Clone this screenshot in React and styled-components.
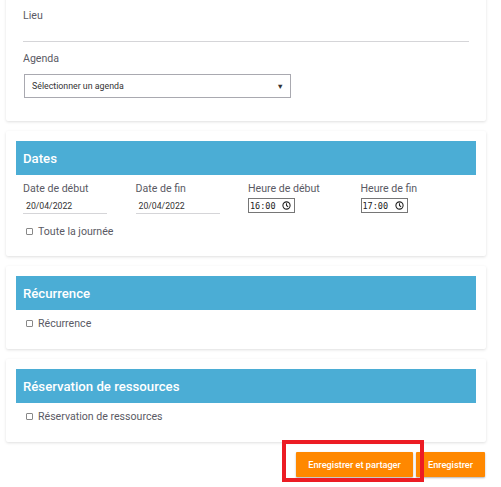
import React from 'react'
import styled, { createGlobalStyle } from 'styled-components'

const GlobalStyle = createGlobalStyle`
  html, body {
    margin: 0;
    padding: 0;
    background: #fff;
  }
  body {
    font-family: Roboto, "Liberation Sans", sans-serif;
    color: #555;
  }
`

const Page = styled.div`
  width: 480px;
  height: 487px;
  padding: 0 6px;
  display: flex;
  flex-direction: column;
  gap: 10px;
  overflow: hidden;
`

const Card = styled.section`
  flex: none;
  background: #fff;
  box-shadow: 0 1px 3px rgba(0, 0, 0, 0.13);
  border-radius: 2px;
  padding: ${(p) => p.pad || '10px 10px 0'};
  margin-top: ${(p) => p.offset || '0'};
`

const Header = styled.h2`
  margin: 0;
  height: 34px;
  line-height: 35px;
  padding: 0 7px;
  background: #4badd5;
  color: #fff;
  font-size: 13.2px;
  font-weight: 500;
`

const Field = styled.div`
  padding: 0 7px;
  margin-top: ${(p) => p.gap || 0}px;
`

const Label = styled.div`
  font-size: 10.6px;
  line-height: 14px;
  color: #5a5a64;
`

const Underline = styled.div`
  height: 18px;
  border-bottom: 1px solid #d5d5d8;
`

const Select = styled.div`
  margin: 8px 0 0 1px;
  width: 267px;
  height: 24px;
  border: 1px solid #a9a9b0;
  display: flex;
  align-items: center;
  justify-content: space-between;
  padding: 0 6px 0 7px;
  box-sizing: border-box;
  font-size: 8.8px;
  color: #333;
`

const Arrow = styled.span`
  font-size: 7.5px;
  color: #333;
`

const Grid = styled.div`
  display: grid;
  grid-template-columns: repeat(4, 112.5px);
  padding: 7px 7px 0;
`

const DateValue = styled.div`
  margin-top: 1px;
  width: 84px;
  height: 17px;
  border-bottom: 1px solid #d5d5d8;
  font-size: 8.7px;
  line-height: 18px;
  padding-left: 3px;
  box-sizing: border-box;
  color: #333;
`

const TimeBox = styled.div`
  margin-top: 2px;
  width: 47px;
  height: 15px;
  border: 1px solid #767676;
  box-sizing: border-box;
  display: flex;
  align-items: center;
  justify-content: space-between;
  padding: 0 3px 0 1px;
  font-family: "DejaVu Sans Mono", "Liberation Mono", monospace;
  font-size: 8.5px;
  color: #222;
`

const Check = styled.label`
  display: flex;
  align-items: center;
  gap: 5px;
  height: 13px;
  padding: ${(p) => p.pad || '7px 0 19px 10px'};
  font-size: 10.6px;
  color: #5a5a64;
`

const Box = styled.span`
  width: 5px;
  height: 5px;
  border: 1px solid #888;
  border-radius: 1px;
`

const Actions = styled.div`
  flex: none;
  display: flex;
  justify-content: flex-end;
  gap: 3px;
  padding: 0 1px 0 0;
`

const Highlight = styled.div`
  position: relative;
  display: flex;
`

const Frame = styled.span`
  position: absolute;
  left: -14px;
  top: -12px;
  right: -11px;
  bottom: -5px;
  border: 4px solid #ec1c24;
  pointer-events: none;
`

const Button = styled.button`
  height: 25px;
  width: ${(p) => p.w}px;
  border: none;
  border-radius: 1px;
  background: #ff8800;
  color: #fff;
  font-family: Roboto, "Liberation Sans", sans-serif;
  font-size: 9.2px;
  font-weight: 500;
  box-shadow: 0 1px 2px rgba(0, 0, 0, 0.3);
  padding: 0;
`

const Clock = () => (
  <svg width='9' height='9' viewBox='0 0 10 10' fill='none' stroke='#222' strokeWidth='1.2'>
    <circle cx='5' cy='5' r='4' />
    <path d='M5 2.6V5l1.8 1.6' />
  </svg>
)

const CheckRow = ({ label, pad }) => (
  <Check pad={pad}>
    <Box />
    {label}
  </Check>
)

const App = () => (
  <Page>
    <GlobalStyle />
    <Card offset='-20px' pad='29px 10px 23px'>
      <Field>
        <Label>Lieu</Label>
        <Underline />
      </Field>
      <Field gap={10}>
        <Label>Agenda</Label>
        <Select>
          Sélectionner un agenda
          <Arrow>▼</Arrow>
        </Select>
      </Field>
    </Card>

    <Card>
      <Header>Dates</Header>
      <Grid>
        <div>
          <Label>Date de début</Label>
          <DateValue>20/04/2022</DateValue>
        </div>
        <div>
          <Label>Date de fin</Label>
          <DateValue>20/04/2022</DateValue>
        </div>
        <div>
          <Label>Heure de début</Label>
          <TimeBox>16:00<Clock /></TimeBox>
        </div>
        <div>
          <Label>Heure de fin</Label>
          <TimeBox>17:00<Clock /></TimeBox>
        </div>
      </Grid>
      <CheckRow label='Toute la journée' pad='11px 0 18px 10px' />
    </Card>

    <Card>
      <Header>Récurrence</Header>
      <CheckRow label='Récurrence' />
    </Card>

    <Card>
      <Header>Réservation de ressources</Header>
      <CheckRow label='Réservation de ressources' />
    </Card>

    <Actions>
      <Highlight>
        <Button w={117}>Enregistrer et partager</Button>
        <Frame />
      </Highlight>
      <Button w={69}>Enregistrer</Button>
    </Actions>
  </Page>
)

export default App
